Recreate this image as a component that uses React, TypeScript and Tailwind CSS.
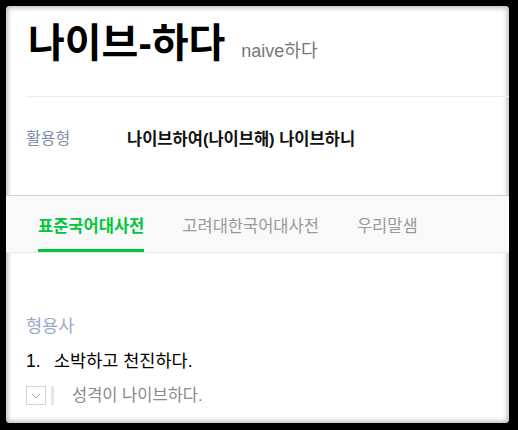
import { ChevronDown } from 'lucide-react';

const font = { fontFamily: '"Liberation Sans", "Noto Sans CJK KR", sans-serif' };

function Tabs() {
  const tabs = ['표준국어대사전', '고려대한국어대사전', '우리말샘'];
  return (
    <div className="border-t border-b border-t-[#cfcfcf] border-b-[#e8e8e8] bg-[#f9f9f9] h-[58px] flex gap-[38px] pl-[32px]">
      {tabs.map((t, i) => (
        <div
          key={t}
          className={
            i === 0
              ? 'flex items-center text-[16.5px] font-bold text-[#00c73c] border-b-[3px] border-[#00c73c] pt-[7px]'
              : 'flex items-center text-[16.5px] text-[#999999] pt-[4px]'
          }
        >
          {t}
        </div>
      ))}
    </div>
  );
}

export default function App() {
  return (
    <div style={font} className="bg-black w-[518px] h-[430px] pt-[6px] pl-[6px] pr-[9px] pb-[7px]">
      <div className="bg-white h-full rounded-[4px] shadow-[inset_0_0_5px_2px_#bdbdbd] overflow-hidden flex flex-col">
        <div className="pl-[20px] pt-[17px]">
          <div className="flex items-baseline gap-[16px] pl-[2px]">
            <h1 className="text-[40px] leading-none font-bold text-black">나이브-하다</h1>
            <span className="text-[18px] text-[#777777]">naive하다</span>
          </div>
          <div className="mt-[31px] border-t border-[#ededed]" />
          <div className="flex items-center h-[98px] pb-[14px]">
            <span className="w-[101px] text-[16px] text-[#7d8ea8]">활용형</span>
            <span className="text-[16.5px] font-bold text-[#111111]">나이브하여(나이브해) 나이브하니</span>
          </div>
        </div>
        <Tabs />
        <div className="pl-[20px] pt-[61px]">
          <div className="text-[17.5px] text-[#97abc8] leading-[24px]">형용사</div>
          <div className="mt-[11px] flex text-[17.5px] text-black leading-[24px]">
            <span className="w-[28px]">1.</span>
            <span>소박하고 천진하다.</span>
          </div>
          <div className="mt-[13px] flex items-center h-[19px]">
            <span className="w-[20px] h-[19px] border border-[#d6d6d6] flex items-center justify-center text-[#999999]">
              <ChevronDown size={14} strokeWidth={1.6} />
            </span>
            <span className="ml-[5px] w-[3px] h-[19px] bg-[#e6e6e6]" />
            <span className="ml-[18px] text-[16.5px] text-[#8a8a8a]">성격이 나이브하다.</span>
          </div>
        </div>
      </div>
    </div>
  );
}
